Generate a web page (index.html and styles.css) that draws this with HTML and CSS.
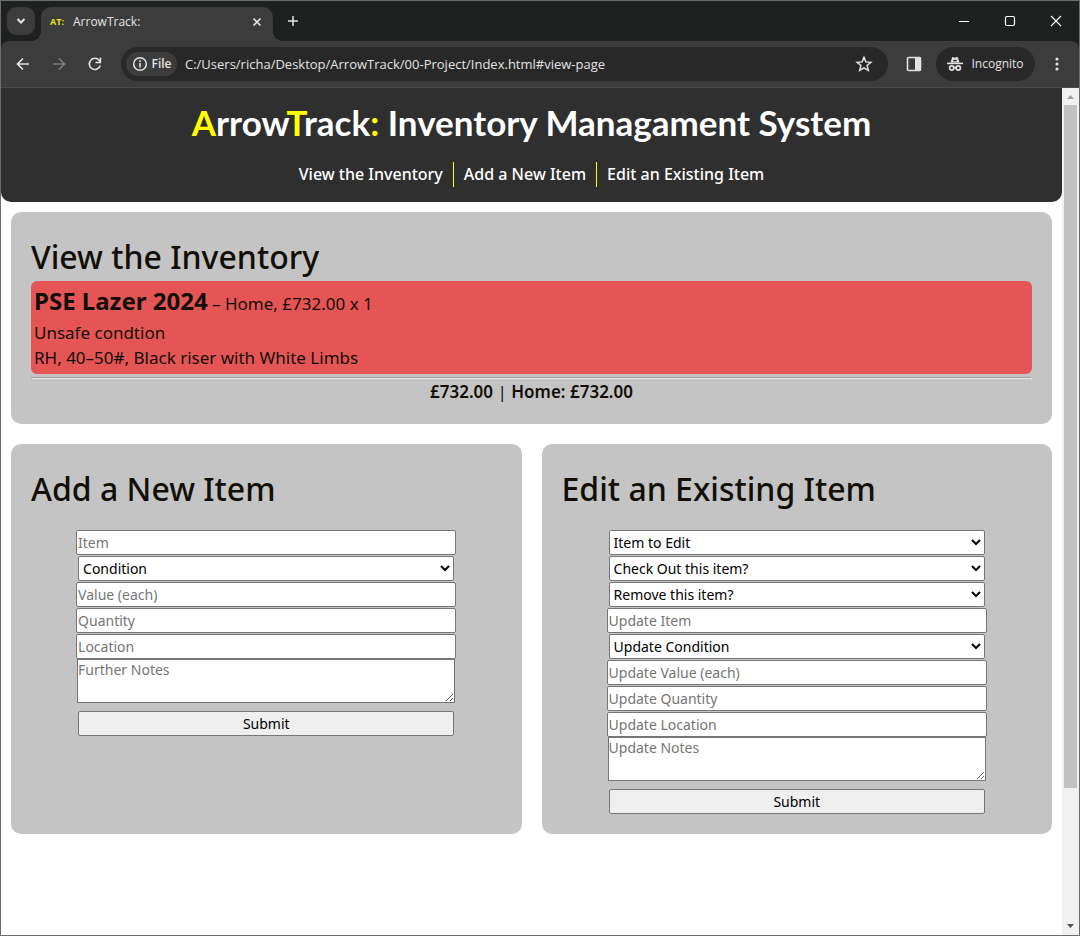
FILE: index.html
```html
<!DOCTYPE html>
<html lang="en">
<head>
<meta charset="utf-8">
<title>ArrowTrack:</title>
<link rel="stylesheet" href="styles.css">
</head>
<body>
<div class="window">
  <div class="tabstrip">
    <button class="tab-search" aria-label="Search tabs"><svg width="12" height="12" viewBox="0 0 12 12"><path d="M2.500 4 6 7.500 9.500 4" fill="none" stroke="currentColor" stroke-width="2"/></svg></button>
    <div class="tab">
      <span class="favicon">AT:</span>
      <span class="tab-title">ArrowTrack:</span>
      <button class="icon-button" aria-label="Close tab"><svg width="10" height="10" viewBox="0 0 10 10"><path d="M1.500 1.500l7 7M8.500 1.500l-7 7" stroke="currentColor" stroke-width="1.600"/></svg></button>
    </div>
    <button class="icon-button new-tab" aria-label="New tab"><svg width="12" height="12" viewBox="0 0 12 12"><path d="M6 1v10M1 6h10" stroke="currentColor" stroke-width="1.500"/></svg></button>
    <div class="window-controls">
      <button class="icon-button" aria-label="Minimize"><svg width="12" height="12" viewBox="0 0 12 12"><path d="M1 6.500h10" stroke="currentColor"/></svg></button>
      <button class="icon-button" aria-label="Maximize"><svg width="12" height="12" viewBox="0 0 12 12"><rect x="1.500" y="1.500" width="9" height="9" rx="1.500" fill="none" stroke="currentColor" stroke-width="1.200"/></svg></button>
      <button class="icon-button" aria-label="Close window"><svg width="12" height="12" viewBox="0 0 12 12"><path d="M1 1l10 10M11 1L1 11" stroke="currentColor" stroke-width="1.200"/></svg></button>
    </div>
  </div>
  <div class="toolbar">
    <div class="nav-buttons">
      <button class="icon-button" aria-label="Back"><svg width="16" height="16" viewBox="0 0 16 16"><path d="M14 8H3M8 2.500 2.500 8 8 13.500" fill="none" stroke="currentColor" stroke-width="1.700"/></svg></button>
      <button class="icon-button" aria-label="Forward" disabled><svg width="16" height="16" viewBox="0 0 16 16"><path d="M2 8h11M8 2.500 13.500 8 8 13.500" fill="none" stroke="currentColor" stroke-width="1.700"/></svg></button>
      <button class="icon-button" aria-label="Reload"><svg width="16" height="16" viewBox="0 0 16 16"><path d="M13.300 9.500A5.600 5.600 0 1 1 12.200 4.300L13.500 6" fill="none" stroke="currentColor" stroke-width="1.600"/><path d="M14.200 1.500v5.700H8.500V5.700h4.200V1.500z" fill="currentColor"/></svg></button>
    </div>
    <div class="omnibox">
      <button class="file-chip"><svg width="16" height="16" viewBox="0 0 16 16"><circle cx="8" cy="8" r="6.300" fill="none" stroke="currentColor" stroke-width="1.500"/><path d="M8 7v4.500M8 4.300v1.600" stroke="currentColor" stroke-width="1.600"/></svg>File</button>
      <input class="address" type="text" aria-label="Address" value="C:/Users/richa/Desktop/ArrowTrack/00-Project/Index.html#view-page">
      <button class="icon-button" aria-label="Bookmark this page"><svg width="18" height="18" viewBox="0 0 18 18"><path d="M9 2.300l1.900 4.600 5 .4-3.800 3.200 1.200 4.900L9 12.800l-4.300 2.600 1.200-4.900-3.800-3.200 5-.4z" fill="none" stroke="currentColor" stroke-width="1.500"/></svg></button>
    </div>
    <button class="icon-button side-panel" aria-label="Side panel"><svg width="16" height="16" viewBox="0 0 16 16"><rect x="1.500" y="1.500" width="13" height="13" rx="1" fill="none" stroke="currentColor" stroke-width="1.600"/><path d="M9 1h6v14H9z" fill="currentColor"/></svg></button>
    <button class="incognito"><svg width="16" height="16" viewBox="0 0 16 16"><path d="M3.500 6.500l1.500-4.800Q5.300.9 6.100 1.100L8 1.700l1.900-.6q.8-.2 1.100.6l1.500 4.800z" fill="currentColor"/><path d="M0 7.400h16" stroke="currentColor" stroke-width="1.600"/><g fill="none" stroke="currentColor" stroke-width="1.700"><circle cx="4.700" cy="12" r="2.100"/><circle cx="11.300" cy="12" r="2.100"/><path d="M6.700 11.700q1.300-.8 2.600 0"/></g><path d="M6.300 4.600h3.400" stroke="#282828" stroke-width="1.500"/></svg>Incognito</button>
    <button class="icon-button menu" aria-label="Menu"><svg width="16" height="16" viewBox="0 0 16 16" fill="currentColor"><circle cx="8" cy="3" r="1.600"/><circle cx="8" cy="8" r="1.600"/><circle cx="8" cy="13" r="1.600"/></svg></button>
  </div>
  <div class="viewport">
    <div class="page">
      <header class="site-header">
        <h1><span class="accent">A</span>rrow<span class="accent">T</span>rack<span class="accent">:</span> Inventory Managament System</h1>
        <nav class="site-nav">
          <a href="#view-page">View the Inventory</a>
          <a href="#add-page">Add a New Item</a>
          <a href="#edit-page">Edit an Existing Item</a>
        </nav>
      </header>
      <main class="panels">
        <section class="panel panel-wide" id="view-page">
          <h2>View the Inventory</h2>
          <article class="item unsafe">
            <div class="item-title"><h3>PSE Lazer 2024</h3> – Home, £732.00 x 1</div>
            <p>Unsafe condtion</p>
            <p>RH, 40–50#, Black riser with White Limbs</p>
          </article>
          <hr>
          <p class="totals"><b>£732.00</b> | <b>Home: £732.00</b></p>
        </section>
        <section class="panel" id="add-page">
          <h2>Add a New Item</h2>
          <form>
            <input type="text" placeholder="Item" aria-label="Item">
            <select aria-label="Condition"><option>Condition</option></select>
            <input type="text" placeholder="Value (each)" aria-label="Value (each)">
            <input type="text" placeholder="Quantity" aria-label="Quantity">
            <input type="text" placeholder="Location" aria-label="Location">
            <textarea placeholder="Further Notes" aria-label="Further Notes"></textarea>
            <button type="button">Submit</button>
          </form>
        </section>
        <section class="panel" id="edit-page">
          <h2>Edit an Existing Item</h2>
          <form>
            <select aria-label="Item to Edit"><option>Item to Edit</option></select>
            <select aria-label="Check Out this item?"><option>Check Out this item?</option></select>
            <select aria-label="Remove this item?"><option>Remove this item?</option></select>
            <input type="text" placeholder="Update Item" aria-label="Update Item">
            <select aria-label="Update Condition"><option>Update Condition</option></select>
            <input type="text" placeholder="Update Value (each)" aria-label="Update Value (each)">
            <input type="text" placeholder="Update Quantity" aria-label="Update Quantity">
            <input type="text" placeholder="Update Location" aria-label="Update Location">
            <textarea placeholder="Update Notes" aria-label="Update Notes"></textarea>
            <button type="button">Submit</button>
          </form>
        </section>
      </main>
    </div>
    <div class="scrollbar" aria-hidden="true">
      <svg width="17" height="17" viewBox="0 0 17 17"><path d="M5 11l3.500-4 3.500 4z" fill="#a3a3a3"/></svg>
      <div class="track"><div class="thumb"></div></div>
      <svg width="17" height="17" viewBox="0 0 17 17"><path d="M5 6l3.500 4L12 6z" fill="#505050"/></svg>
    </div>
  </div>
</div>
</body>
</html>
```
FILE: styles.css
```css
* { box-sizing: border-box; }

body {
  margin: 0;
  font-family: "Noto Sans", "Open Sans", sans-serif;
  font-size: 16px;
  line-height: 25px;
  color: #120f08;
}

h1, h2, h3, p { margin: 0; }

.window {
  display: flex;
  flex-direction: column;
  min-height: 100vh;
  border: 1px solid #6b6d6c;
  background: #fff;
}

/* Browser chrome */
.tabstrip, .toolbar {
  display: flex;
  align-items: center;
  font-family: "Open Sans", sans-serif;
  font-size: 12px;
  line-height: 16px;
  color: #e3e3e3;
}

.tabstrip {
  position: relative;
  z-index: 1;
  height: 40px;
  padding-left: 6px;
  background: #1f2120;
}

.tabstrip button, .toolbar button {
  display: flex;
  align-items: center;
  justify-content: center;
  padding: 0;
  border: 0;
  background: none;
  color: inherit;
  font: inherit;
}

.icon-button { width: 24px; height: 24px; }

.tabstrip .tab-search {
  width: 28px;
  height: 28px;
  border-radius: 9px;
  background: #3c3c3c;
}

.tab {
  position: relative;
  display: flex;
  align-items: center;
  align-self: flex-end;
  width: 232px;
  height: 34px;
  margin-left: 6px;
  padding: 0 4px 4px 9px;
  border-radius: 10px 10px 0 0;
  background: #3c3c3c;
}

.tab::before, .tab::after {
  content: "";
  position: absolute;
  bottom: 0;
  width: 10px;
  height: 10px;
}

.tab::before {
  right: 100%;
  background: radial-gradient(circle at 0 0, transparent 10px, #3c3c3c 10px);
}

.tab::after {
  left: 100%;
  background: radial-gradient(circle at 100% 0, transparent 10px, #3c3c3c 10px);
}

.favicon {
  width: 23px;
  font-size: 9px;
  font-weight: 700;
  color: #e0e01c;
}

.tab-title { flex: 1; }
.new-tab { margin-left: 8px; }

.window-controls {
  display: flex;
  gap: 22px;
  margin-left: auto;
  padding-right: 11px;
  color: #fff;
}

.toolbar {
  height: 47px;
  border-bottom: 1px solid #4a4a4a;
  border-radius: 8px 8px 0 0;
  background: #3c3c3c;
  box-shadow: 0 -8px 0 #1f2120;
}

.nav-buttons {
  display: flex;
  gap: 12px;
  padding: 0 14px 0 10px;
}

.nav-buttons button:disabled { color: #7a7a7a; }

.omnibox {
  display: flex;
  flex: 1;
  align-items: center;
  height: 34px;
  padding: 0 12px 0 5px;
  border-radius: 17px;
  background: #282828;
}

.toolbar .file-chip {
  gap: 4px;
  width: 51px;
  height: 24px;
  border-radius: 12px;
  background: #3c3c3c;
  font-weight: 600;
}

.address {
  flex: 1;
  min-width: 0;
  margin-left: 8px;
  padding: 0;
  border: 0;
  background: none;
  color: #e3e3e3;
  font: 13px/20px "Open Sans", sans-serif;
}

.side-panel { margin: 0 10px 0 14px; color: #c7c7c7; }

.toolbar .incognito {
  gap: 8px;
  width: 99px;
  height: 34px;
  border-radius: 17px;
  background: #282828;
}

.menu { margin: 0 10px; }

/* Page */
.viewport { display: flex; flex: 1; }
.page { flex: 1; min-width: 0; }

.site-header {
  display: flex;
  flex-direction: column;
  align-items: center;
  gap: 15px;
  padding: 10px 0 15px;
  border-radius: 0 0 10px 10px;
  background: #2f2f2f;
  color: #fff;
}

h1 {
  font-family: Lato, "Noto Sans", sans-serif;
  font-size: 35px;
  line-height: 49px;
  font-weight: 700;
}

.accent { color: #ff0; }
.site-nav { display: flex; }

.site-nav a {
  padding: 0 10px;
  color: #fff;
  font-weight: 500;
  text-decoration: none;
}

.site-nav a + a { border-left: 1px solid #ff0; }

.panels {
  display: grid;
  grid-template-columns: 1fr 1fr;
  gap: 20px;
  padding: 10px;
}

.panel {
  padding: 20px;
  border-radius: 10px;
  background: #c4c4c4;
}

.panel-wide { grid-column: 1 / -1; font-size: 17px; }

h2 {
  font-size: 32px;
  line-height: 49px;
  font-weight: 500;
}

.item {
  padding: 5px 3px;
  border-radius: 6px;
}

.unsafe { background: #e55555; }
.item p { line-height: 25px; }
.item-title { line-height: 33px; }

h3 {
  display: inline;
  font-size: 24px;
  line-height: 33px;
  font-weight: 700;
}

.item { padding: 3px 3px 4px; }

hr { margin: 3px 0 0; }
.totals { text-align: center; }
.totals b { font-weight: 600; }

form {
  display: flex;
  flex-direction: column;
  align-items: center;
  gap: 1px;
  padding-top: 17px;
}

form input, form select, form textarea, form button {
  width: 80%;
  height: 25px;
  margin: 0;
  border: 1px solid #767676;
  border-radius: 2px;
  background: #fff;
  color: #000;
  font: 14px/20px "Noto Sans", "Open Sans", sans-serif;
}

form input {
  box-sizing: content-box;
  height: 21px;
  padding: 1px;
}

form textarea {
  box-sizing: content-box;
  height: 42px;
  margin-top: -1px;
  padding: 0;
  border-radius: 0;
}

form button {
  margin-top: 7px;
  background: #efefef;
}

form ::placeholder { color: #757575; }

.scrollbar {
  display: flex;
  flex-direction: column;
  width: 17px;
  background: #f1f1f1;
}

.track { flex: 1; padding: 0 2px; }
.thumb { height: 84%; background: #c1c1c1; }
```
